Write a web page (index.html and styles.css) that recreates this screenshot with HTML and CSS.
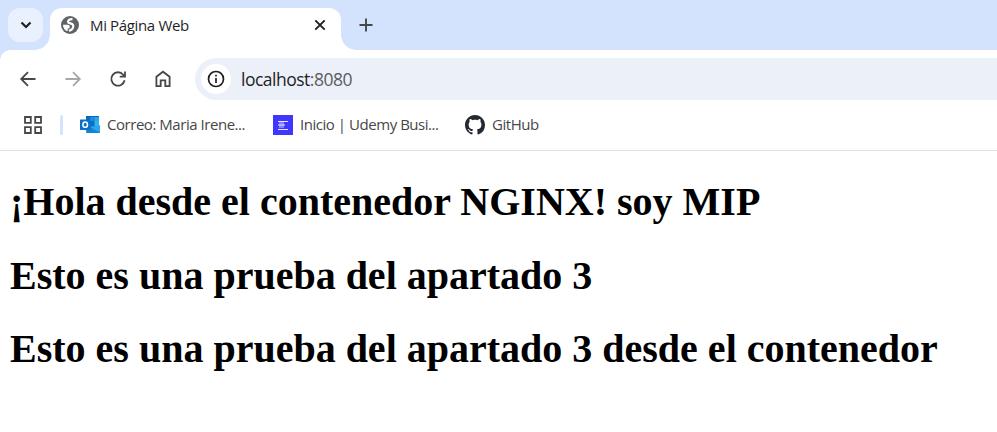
FILE: index.html
```html
<!DOCTYPE html>
<html lang="es">
<head>
<meta charset="utf-8">
<title>Mi Página Web</title>
<link rel="stylesheet" href="styles.css">
</head>
<body>
<header class="tabstrip">
  <div class="tab-search"><svg width="12" height="12" viewBox="0 0 12 12"><path d="M1.500 3.500 6 8l4.500-4.500" fill="none" stroke="#1f1f1f" stroke-width="2.200"/></svg></div>
  <div class="tab">
    <svg class="favicon" width="18" height="18" viewBox="0 0 18 18"><circle cx="9" cy="9" r="9" fill="#5f6368"/><path d="M2 8.700h4.200c1.700 0 2.600.9 2.600 2.200 0 1-.7 1.600-2.100 1.600v2.800C3.800 14.400 2 11.900 2 8.700Z" fill="#fff"/><path d="M11.500 3.300C9 2.900 7 4 7 5.700c0 2.100 3.900 1.300 5 3.200 1.200 2.200-.6 4.800-4 6" fill="none" stroke="#fff" stroke-width="2.200"/></svg>
    <span class="tab-title">Mi Página Web</span>
    <svg class="close" width="12" height="12" viewBox="0 0 12 12"><path d="m1.300 1.300 9.400 9.400m0-9.400-9.400 9.400" stroke="#1f1f1f" stroke-width="1.900"/></svg>
  </div>
  <svg class="new-tab" width="14" height="14" viewBox="0 0 14 14"><path d="M7 .5v13M.5 7h13" stroke="#474747" stroke-width="1.900"/></svg>
</header>
<nav class="toolbar">
  <svg width="20" height="20" viewBox="0 0 20 20"><path d="M17.500 10H3.800M10 3.200 3.200 10l6.800 6.800" fill="none" stroke="#474747" stroke-width="1.800"/></svg>
  <svg width="20" height="20" viewBox="0 0 20 20"><path d="M2.500 10h13.700M10 3.200l6.800 6.800-6.800 6.800" fill="none" stroke="#a7a7a7" stroke-width="1.800"/></svg>
  <svg width="20" height="20" viewBox="0 0 20 20"><path d="M16.600 11.300A6.700 6.700 0 1 1 15.200 5.700l1.600 1.700M17 2.500v5.200h-5.300" fill="none" stroke="#474747" stroke-width="1.800"/></svg>
  <svg width="20" height="20" viewBox="0 0 20 20"><path d="M3.400 7.800 10 2.700l6.600 5.100v9.400h-4.300v-5.800H7.700v5.800H3.400Z" fill="none" stroke="#474747" stroke-width="1.800"/></svg>
  <div class="omnibox">
    <span class="site-info"><svg width="18" height="18" viewBox="0 0 18 18"><circle cx="9" cy="9" r="7.500" fill="none" stroke="#1f1f1f" stroke-width="1.700"/><path d="M9 8v5M9 4.800v1.800" stroke="#1f1f1f" stroke-width="1.700"/></svg></span>
    <span class="url">localhost<span class="port">:8080</span></span>
  </div>
</nav>
<div class="bookmarks">
  <svg class="apps" width="20" height="20" viewBox="0 0 20 20"><path d="M2 2h5.800v5.800H2ZM12.200 2H18v5.800h-5.800ZM2 12.200h5.800V18H2ZM12.200 12.200H18V18h-5.800Z" fill="none" stroke="#474747" stroke-width="1.800"/></svg>
  <span class="divider"></span>
  <a class="bookmark mail"><svg width="20" height="20" viewBox="0 0 20 20"><path d="M6 1h13v10H6Z" fill="#0f65b8"/><path d="M10 2h4.500v4H10Z" fill="#1490df"/><path d="M14.500 2H19v5h-4.500Z" fill="#28a8ea"/><path d="M6 6h8.500v5H6Z" fill="#0f6cc0"/><path d="M14.500 6H19v5h-4.500Z" fill="#2fb4f0"/><path d="M5 11h15v7H6.500Z" fill="#1490df"/><path d="M20 10v8L10 12.500Z" fill="#28a8ea"/><path d="M9 11.500 20 18H6.500Z" fill="#1682d0"/><rect y="4.500" width="10.500" height="10.500" rx=".6" fill="#0a70ca"/><ellipse cx="5.200" cy="9.700" rx="2.300" ry="2.600" fill="none" stroke="#fff" stroke-width="1.500"/></svg><span class="label">Correo: Maria Irene...</span></a>
  <a class="bookmark udemy"><svg width="20" height="20" viewBox="0 0 20 20"><path d="M0 0h20v20H0Z" fill="#3f36ff"/><path d="M6 7h5v6H6Z" fill="#8580ff"/><path d="M5 6.500h10M5 10h7M5 14.500h10" stroke="#e6e5ff" stroke-width="1"/></svg><span class="label">Inicio | Udemy Busi...</span></a>
  <a class="bookmark github"><svg width="20" height="20" viewBox="0 0 16 16"><path fill="#24292f" d="M8 0C3.580 0 0 3.580 0 8c0 3.540 2.290 6.530 5.470 7.590.4.070.55-.17.55-.38 0-.19-.01-.82-.01-1.490-2.010.37-2.530-.49-2.690-.94-.09-.23-.48-.94-.82-1.130-.28-.15-.68-.52-.01-.53.63-.01 1.080.58 1.230.82.72 1.210 1.870.87 2.330.66.07-.52.28-.87.51-1.070-1.780-.2-3.640-.89-3.640-3.950 0-.87.31-1.590.82-2.150-.08-.2-.36-1.020.08-2.120 0 0 .67-.21 2.200.82.64-.18 1.320-.27 2-.27s1.360.09 2 .27c1.530-1.040 2.200-.82 2.200-.82.44 1.100.16 1.920.08 2.120.51.56.82 1.270.82 2.150 0 3.070-1.870 3.750-3.650 3.950.29.25.54.73.54 1.480 0 1.070-.01 1.930-.01 2.200 0 .21.15.46.55.38A8.010 8.010 0 0 0 16 8c0-4.420-3.580-8-8-8Z"/></svg><span class="label">GitHub</span></a>
</div>
<main class="page">
  <h1>¡Hola desde el contenedor NGINX! soy MIP</h1>
  <h1>Esto es una prueba del apartado 3</h1>
  <h1>Esto es una prueba del apartado 3 desde el contenedor</h1>
</main>
</body>
</html>
```
FILE: styles.css
```css
* { box-sizing: border-box; }
body { margin: 0; height: 432px; overflow: hidden; background: #fff; font-family: "Open Sans", sans-serif; color: #1f1f1f; }
svg { display: block; flex: none; }
.tabstrip { height: 50px; padding: 8px 8px 0; display: flex; background: #d3e3fd; }
.tab-search { width: 35px; height: 34px; border-radius: 12px; background: #e9f1fe; display: flex; align-items: center; justify-content: center; }
.tab { position: relative; width: 291px; margin-left: 7px; padding: 0 15px 8px 11px; background: #fff; border-radius: 12px 12px 0 0; display: flex; align-items: center; }
.tab::before, .tab::after { content: ""; position: absolute; bottom: 0; width: 15px; height: 15px; }
.tab::before { left: -15px; background: radial-gradient(circle at 0 0, transparent 14.5px, #fff 15px); }
.tab::after { right: -15px; background: radial-gradient(circle at 100% 0, transparent 14.5px, #fff 15px); }
.tab-title { margin-left: 11px; flex: 1; font-size: 15px; letter-spacing: -.35px; white-space: nowrap; }
.new-tab { margin: 10px 0 0 18px; }
.toolbar { height: 50px; padding: 8px 0 0 18px; display: flex; align-items: center; gap: 25px; background: #fff; position: relative; }
.toolbar > svg { margin-top: -1px; }
.toolbar::before { content: ""; position: absolute; left: 0; top: 0; width: 10px; height: 10px; background: radial-gradient(circle at 100% 100%, transparent 9.5px, #d3e3fd 10px); }
.omnibox { flex: 1; height: 42px; margin-left: -3px; padding-left: 6px; border-radius: 21px 0 0 21px; background: #ecf0f9; display: flex; align-items: center; }
.site-info { width: 30px; height: 30px; border-radius: 50%; background: #fff; display: flex; align-items: center; justify-content: center; }
.url { margin-left: 10px; font-size: 17.5px; letter-spacing: -.5px; white-space: nowrap; }
.port { color: #5a5d61; }
.bookmarks { height: 51px; border-bottom: 1px solid #dfe1e4; display: flex; align-items: center; padding-left: 23px; }
.divider { width: 3px; height: 20px; margin-left: 17px; border-radius: 2px; background: #d3e3fd; }
.bookmark { display: flex; align-items: center; gap: 7px; font-size: 15px; color: #474747; white-space: nowrap; }
.label { margin-top: -2px; letter-spacing: -.46px; }
.mail { width: 193px; margin-left: 17px; }
.udemy { width: 192px; }
.page { padding: 1.5px 10px 0; }
h1 { margin: 26.8px 0; font: bold 40px/46.6px "Liberation Serif", serif; color: #000; white-space: nowrap; }
```
